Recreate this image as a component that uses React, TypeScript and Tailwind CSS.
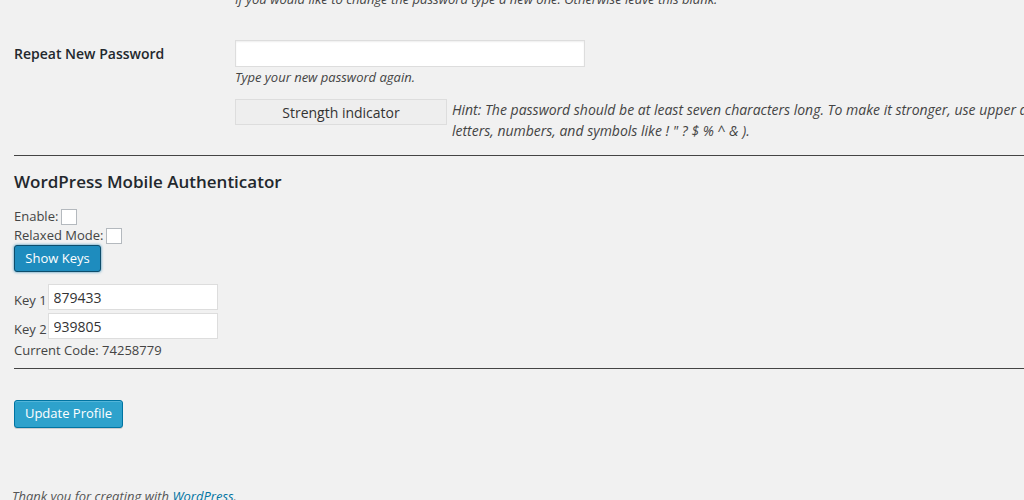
import React from 'react';

const App: React.FC = () => {
    return (
        <div
            className="h-[500px] w-[1024px] overflow-hidden bg-[#f1f1f1] text-[13px] text-[#444]"
            style={{ fontFamily: '"Open Sans", "Noto Sans", sans-serif' }}
        >
            <div className="pl-[14px]">
                <p className="-mt-[11px] ml-[221px] whitespace-nowrap italic leading-[20px]">
                    If you would like to change the password type a new one. Otherwise leave this blank.
                </p>

                <div className="mt-[31px] flex">
                    <label className="w-[221px] shrink-0 pt-[4px] text-[14px] font-semibold leading-[20px] text-[#23282d]">
                        Repeat New Password
                    </label>
                    <div>
                        <input
                            type="password"
                            className="block h-[27px] w-[350px] border border-[#ddd] bg-white shadow-[inset_0_1px_2px_rgba(0,0,0,0.07)] outline-none"
                        />
                        <p className="italic leading-[20px]">Type your new password again.</p>
                        <div className="mt-[12px] flex">
                            <div className="flex h-[26px] w-[212px] shrink-0 items-center justify-center border border-[#ddd] bg-[#eee] text-[14px] text-[#333]">
                                Strength indicator
                            </div>
                            <p className="ml-[5px] whitespace-nowrap text-[14px] italic leading-[21px]">
                                Hint: The password should be at least seven characters long. To make it stronger, use upper and lower case
                                <br />
                                letters, numbers, and symbols like ! " ? $ % ^ &amp; ).
                            </p>
                        </div>
                    </div>
                </div>

                <hr className="mt-[14px] border-0 border-t border-[#444]" />

                <h3 className="mt-[14px] text-[17px] font-semibold leading-[23px] text-[#23282d]">
                    WordPress Mobile Authenticator
                </h3>

                <div className="mt-[14px] flex items-center leading-[19px]">
                    Enable:
                    <input type="checkbox" className="ml-[3px] h-[16px] w-[16px] appearance-none border border-[#b4b9be] bg-white" />
                </div>
                <div className="flex items-center leading-[19px]">
                    Relaxed Mode:
                    <input type="checkbox" className="ml-[3px] h-[16px] w-[16px] appearance-none border border-[#b4b9be] bg-white" />
                </div>
                <button className="h-[27px] w-[87px] rounded-[3px] border border-[#0e4d6b] bg-[#1e8cbe] text-[13px] text-white shadow-[0_0_3px_rgba(0,115,170,0.8)]">
                    Show Keys
                </button>

                <div className="mt-[12px] flex items-end">
                    <span className="mr-[1px] leading-[19px]">Key 1</span>
                    <input
                        type="text"
                        defaultValue="879433"
                        className="h-[26px] w-[170px] border border-[#ddd] bg-white px-[5px] text-[14px] text-[#333] outline-none"
                    />
                </div>
                <div className="mt-[3px] flex items-end">
                    <span className="mr-[1px] leading-[19px]">Key 2</span>
                    <input
                        type="text"
                        defaultValue="939805"
                        className="h-[26px] w-[170px] border border-[#ddd] bg-white px-[5px] text-[14px] text-[#333] outline-none"
                    />
                </div>
                <p className="leading-[22px]">Current Code: 74258779</p>

                <hr className="mt-[7px] border-0 border-t border-[#444]" />

                <button className="mt-[31px] h-[28px] w-[109px] rounded-[3px] border border-[#0074a2] bg-[#2ea2cc] text-[13px] text-white shadow-[inset_0_1px_0_rgba(120,200,230,0.5),0_1px_0_rgba(0,0,0,0.15)]">
                    Update Profile
                </button>

                <p className="-ml-[2px] mt-[58px] italic leading-[20px] text-[#555]">
                    Thank you for creating with <a className="text-[#0074a2]">WordPress</a>.
                </p>
            </div>
        </div>
    );
};

export default App;
